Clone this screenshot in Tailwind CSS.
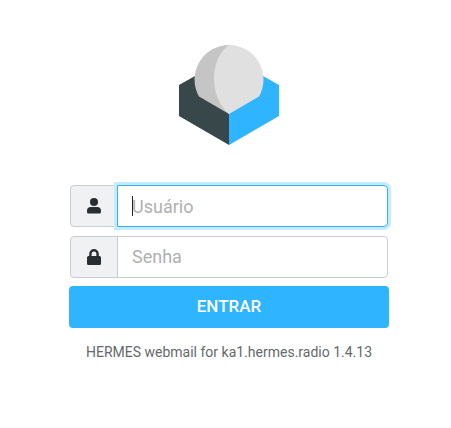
<!DOCTYPE html>
<html lang="pt">
<head>
<meta charset="utf-8">
<meta name="viewport" content="width=device-width, initial-scale=1">
<title>HERMES webmail</title>
<script src="https://cdn.jsdelivr.net/npm/@tailwindcss/browser@4"></script>
</head>
<body class="min-h-screen bg-white pl-[7px] font-['Roboto',sans-serif]">
<main class="mx-auto flex max-w-80 flex-col items-center pt-[45px]">
  <svg class="size-[100px]" viewBox="0 0 100 100" role="img" aria-label="Roundcube">
    <path fill="#37474a" d="M0 40 16 31 50 50V100L0 71Z"/>
    <path fill="#2fb4ff" d="M100 40 84 31 50 50V100L100 71Z"/>
    <path fill="#c5c5c5" d="M50 0A34.500 34.500 0 0 0 20 51.500L50 69Z"/>
    <path fill="#e0e0e0" d="M50 0A34.500 34.500 0 0 1 80 51.500L50 69C30 52 30 14 50 0Z"/>
  </svg>
  <form class="mt-10 flex w-full flex-col gap-2">
    <div class="mx-px flex h-[42px]">
      <label for="user" aria-label="Usuário" class="flex w-12 shrink-0 items-center justify-center rounded-l border border-[#c8ccd6] bg-[#f0f1f3]">
        <svg class="h-4 w-3.5" viewBox="0 0 14 16" fill="#272f32" aria-hidden="true"><circle cx="7" cy="4" r="4"/><path d="M3.8 9H10.200A3.800 3.800 0 0 1 14 12.800V14A1.600 1.600 0 0 1 12.400 15.600H1.600A1.600 1.600 0 0 1 0 14V12.800A3.800 3.800 0 0 1 3.800 9Z"/></svg>
      </label>
      <div class="relative -ml-px min-w-0 flex-1">
        <input id="user" type="text" aria-label="Usuário" placeholder="Usuário" class="block size-full rounded-r border border-[#2fb1fc] bg-white px-3.5 text-lg text-[#2c363a] caret-transparent ring-3 ring-[#c6ebff] outline-none placeholder:text-[#b0b0b0]">
        <span class="absolute top-[11px] left-[15px] h-5 w-px bg-[#222]" aria-hidden="true"></span>
      </div>
    </div>
    <div class="mx-px mt-px flex h-[42px]">
      <label for="pass" aria-label="Senha" class="flex w-12 shrink-0 items-center justify-center rounded-l border border-[#c8ccd6] bg-[#f0f1f3]">
        <svg class="h-4 w-3.5" viewBox="0 0 14 16" fill="#272f32" aria-hidden="true"><path fill-rule="evenodd" d="M12.500 7H11.800V4.800A4.800 4.800 0 0 0 2.200 4.800V7H1.500A1.500 1.500 0 0 0 0 8.500V14.500A1.500 1.500 0 0 0 1.500 16H12.500A1.500 1.500 0 0 0 14 14.500V8.500A1.500 1.500 0 0 0 12.500 7ZM9.400 7H4.600V4.800A2.400 2.400 0 0 1 9.400 4.800Z"/></svg>
      </label>
      <input id="pass" type="password" aria-label="Senha" placeholder="Senha" class="-ml-px min-w-0 flex-1 rounded-r border border-[#c8ccd6] bg-white px-3.5 text-lg text-[#2c363a] outline-none placeholder:text-[#b0b0b0]">
    </div>
    <button type="submit" class="h-[42px] w-full rounded bg-[#2fb4ff] text-[17px] font-medium text-white">ENTRAR</button>
  </form>
  <p class="mt-3.5 text-center text-sm text-[#66696b]">HERMES webmail for ka1.hermes.radio 1.4.13</p>
</main>
</body>
</html>
